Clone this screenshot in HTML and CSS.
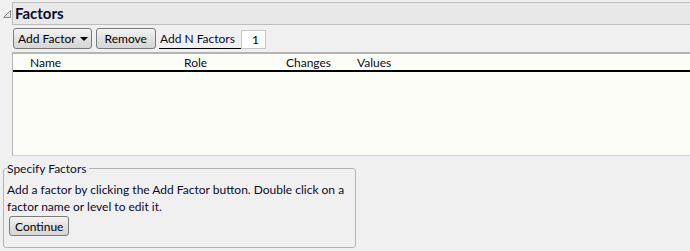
FILE: index.html
```html
<!DOCTYPE html>
<html lang="en">
<head>
    <meta charset="UTF-8">
    <title>Factors</title>
    <link rel="stylesheet" href="styles.css">
</head>
<body>

    <div class="outline">
        <div class="outline-head">
            <div class="toggle">
                <svg width="12" height="22" viewBox="0 0 12 22">
                    <path d="M10.5 8.5 L10.5 15.5 L3.5 15.5 Z" fill="#e4e4e4" stroke="#8a8a8a" stroke-width="1"/>
                </svg>
            </div>
            <div class="title-bar">Factors</div>
        </div>

        <div class="outline-body">
            <div class="toolbar">
                <button class="btn btn-menu">Add Factor <span class="caret"></span></button>
                <button class="btn btn-remove">Remove</button>
                <label class="n-label">Add N Factors</label>
                <div class="n-input">1</div>
            </div>

            <div class="factor-table">
                <div class="table-head">
                    <span class="col col-name">Name</span>
                    <span class="col col-role">Role</span>
                    <span class="col col-changes">Changes</span>
                    <span class="col col-values">Values</span>
                </div>
            </div>
        </div>
    </div>

    <fieldset class="specify">
        <legend>Specify Factors</legend>
        <p>Add a factor by clicking the Add Factor button. Double click on a factor name or level to edit it.</p>
        <button class="btn btn-continue">Continue</button>
    </fieldset>

</body>
</html>
```

FILE: styles.css
```css
body {
    margin: 0;
    padding: 0;
    background-color: #f0f0f0;
    font-family: 'Lato', 'Noto Sans', sans-serif;
    font-size: 12px;
    color: #000;
}

.outline-head {
    display: flex;
    margin-top: 2px;
}

.toggle {
    width: 12px;
    height: 23px;
}

.title-bar {
    flex: 1;
    height: 21px;
    line-height: 20px;
    background-color: #e8e8e8;
    border-top: 1px solid #bdbdbd;
    border-bottom: 1px solid #bdbdbd;
    border-left: 1px solid #bdbdbd;
    padding-left: 2px;
    font-size: 15px;
    font-weight: 700;
    color: #0b0b2a;
}

.outline-body {
    padding-left: 12px;
}

.toolbar {
    display: flex;
    align-items: center;
    margin-top: 3px;
    padding-left: 1px;
    height: 21px;
}

.btn {
    height: 21px;
    padding: 0 6px;
    font-family: inherit;
    font-size: 12px;
    color: #000;
    background: linear-gradient(#f4f4f4, #e2e2e2 50%, #d6d6d6);
    border: 1px solid #7a7a7a;
    border-radius: 3px;
    margin-right: 4px;
    display: inline-flex;
    align-items: center;
}

.btn-menu {
    padding: 0 3px 0 4px;
}

.btn-remove {
    padding: 0 8px;
    margin-right: 3px;
}

.caret {
    display: inline-block;
    width: 0;
    height: 0;
    margin-left: 4px;
    border-left: 4px solid transparent;
    border-right: 4px solid transparent;
    border-top: 4px solid #000;
}

.n-label {
    height: 20px;
    line-height: 21px;
    border-bottom: 1px solid #000;
    padding: 0 6px 0 1px;
    color: #0b0b2a;
}

.n-input {
    width: 17px;
    height: 17px;
    line-height: 17px;
    margin-top: 1px;
    background-color: #fff;
    border: 1px solid #c8c8c8;
    text-align: right;
    padding-right: 6px;
    box-sizing: content-box;
}

.factor-table {
    margin-top: 3px;
    height: 101px;
    background-color: #fcfdf7;
    border-top: 2px solid #b4b4b4;
    border-left: 1px solid #b4b4b4;
    border-bottom: 1px solid #d4d4d4;
}

.table-head {
    display: flex;
    height: 16px;
    line-height: 17px;
    border-bottom: 2px solid #000;
    color: #0b0b2a;
}

.col-name {
    margin-left: 17px;
    width: 154px;
}

.col-role {
    width: 102px;
}

.col-changes {
    width: 71px;
}

.specify {
    margin: 5px 0 0 3px;
    width: 345px;
    padding: 0 3px 11px 3px;
    border: 1px solid #b4b4b4;
    border-radius: 3px;
}

.specify legend {
    padding: 0 3px 0 0;
    margin-left: 0;
    color: #0b0b2a;
}

.specify p {
    margin: 5px 0 1px 0;
    line-height: 17px;
    color: #0b0b2a;
}

.btn-continue {
    height: 20px;
    padding: 0 5px;
    margin-left: 2px;
}
```
